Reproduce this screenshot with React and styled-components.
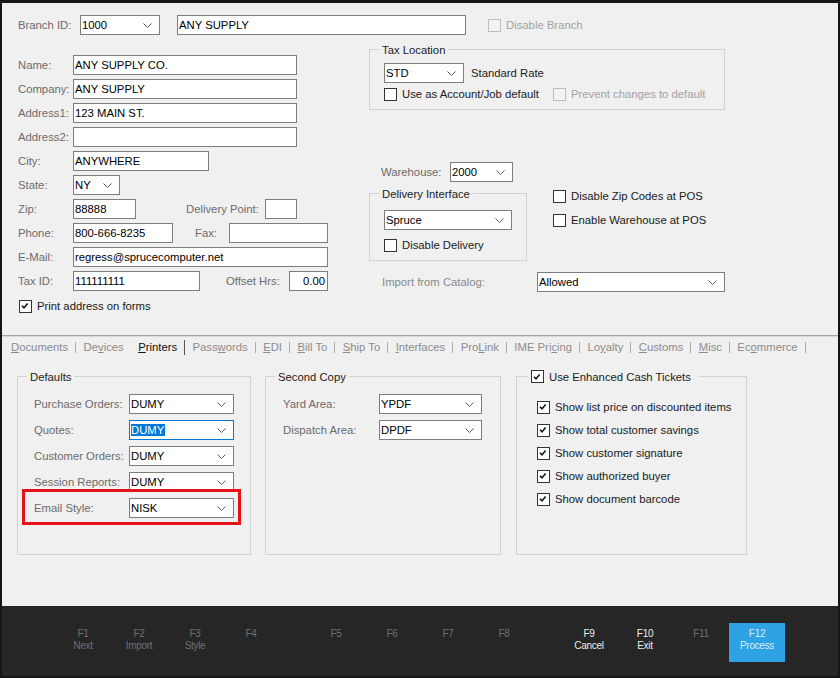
import React from 'react'
import styled, { createGlobalStyle } from 'styled-components'

const GlobalStyle = createGlobalStyle`
  * { box-sizing: border-box; }
  body {
    margin: 0;
    background: #f0f0f0;
    font-family: "Liberation Sans", Arial, sans-serif;
    font-size: 11.3px;
    color: #000;
  }
`

// frame
const Frame = styled.div`
  width: 840px;
  height: 678px;
  border: 2px solid #161616;
  border-top-width: 3px;
  display: flex;
  flex-direction: column;
  background: #f0f0f0;
  overflow: hidden;
`

const Top = styled.div`
  height: 332px;
  padding: 12px 0 0 16px;
  flex-shrink: 0;
`

const Row = styled.div`
  display: flex;
  align-items: center;
  height: 20px;
  margin-top: ${p => p.mt || 0}px;
  flex-shrink: 0;
`

const Label = styled.span`
  width: ${p => p.w}px;
  margin-left: ${p => p.ml || 0}px;
  flex-shrink: 0;
  white-space: nowrap;
  color: ${p => (p.light ? '#8a8a8a' : '#6b6b6b')};
`

const Text = styled.span`
  margin-left: ${p => p.ml || 0}px;
  color: #1c1c1c;
  white-space: nowrap;
`

const Box = styled.div`
  width: ${p => p.w}px;
  height: 20px;
  margin-left: ${p => p.ml || 0}px;
  flex-shrink: 0;
  background: #fff;
  border: 1px solid ${p => (p.focus ? '#0078d7' : '#7d7d7d')};
  padding: 0 2px 0 1px;
  display: flex;
  align-items: center;
  justify-content: ${p => (p.right ? 'flex-end' : 'space-between')};
  white-space: nowrap;
  color: #000;
  line-height: 16px;
`

const Selected = styled.span`
  background: #0078d7;
  color: #fff;
  padding-right: 1px;
`

const Chevron = () => (
  <svg width="9" height="5" viewBox="0 0 9 5" style={{ marginRight: 5, flexShrink: 0 }}>
    <path d="M0.5 0.5 L4.5 4.5 L8.5 0.5" fill="none" stroke="#5a5a5a" strokeWidth="1" />
  </svg>
)

function Select({ w, ml, focus, children }) {
  return (
    <Box w={w} ml={ml} focus={focus}>
      <span>{children}</span>
      <Chevron />
    </Box>
  )
}

// checkbox
const CheckSquare = styled.span`
  width: 13px;
  height: 13px;
  flex-shrink: 0;
  border: 1px solid ${p => (p.disabled ? '#bdbdbd' : '#333')};
  background: ${p => (p.disabled ? '#f3f3f3' : '#fff')};
  display: inline-flex;
  align-items: center;
  justify-content: flex-start;
  padding-left: 1px;
`

const CheckRow = styled.div`
  display: flex;
  align-items: center;
  gap: 5px;
  height: 14px;
  width: ${p => (p.w ? p.w + 'px' : 'auto')};
  margin-left: ${p => p.ml || 0}px;
  margin-top: ${p => p.mt || 0}px;
  flex-shrink: 0;
  white-space: nowrap;
  color: ${p => (p.disabled ? '#a2a2a2' : '#1a1a1a')};
`

function Check({ checked, disabled, children, ...rest }) {
  return (
    <CheckRow disabled={disabled} {...rest}>
      <CheckSquare disabled={disabled}>
        {checked && (
          <svg width="8" height="8" viewBox="0 0 8 8">
            <path d="M1 3.8 L3 5.9 L6.6 1.6" fill="none" stroke="#111" strokeWidth="1.6" />
          </svg>
        )}
      </CheckSquare>
      <span>{children}</span>
    </CheckRow>
  )
}

// group box
const Group = styled.div`
  position: relative;
  width: ${p => p.w}px;
  height: ${p => p.h}px;
  flex-shrink: 0;
  border: 1px solid #d2d2d2;
  padding: ${p => p.pt}px 0 0 ${p => p.pl}px;
  margin-left: ${p => p.ml || 0}px;
`

const Legend = styled.div`
  position: absolute;
  top: -8px;
  left: ${p => p.left || 9}px;
  padding: 0 ${p => p.pr || 3}px 0 3px;
  height: 15px;
  display: flex;
  align-items: center;
  background: #f0f0f0;
  color: #1c1c1c;
  white-space: nowrap;
`

// top layout
const Body = styled.div`
  display: flex;
  margin-top: 14px;
`

const LeftCol = styled.div`
  width: 310px;
  padding-top: 6px;
  display: flex;
  flex-direction: column;
  gap: 4px;
`

const RightCol = styled.div`
  margin-left: 41px;
  display: flex;
  flex-direction: column;
`

const DeliveryLine = styled.div`
  display: flex;
  align-items: flex-start;
  margin-top: 11px;
`

const SideChecks = styled.div`
  display: flex;
  flex-direction: column;
  gap: 10px;
  margin: -4px 0 0 26px;
`

// tabs
const Divider = styled.div`
  height: 2px;
  border-top: 1px solid #a3a3a3;
  border-bottom: 1px solid #d9d9d9;
  flex-shrink: 0;
`

const TabBar = styled.div`
  height: 20px;
  display: flex;
  align-items: center;
  padding-left: 9px;
  flex-shrink: 0;
`

const Tab = styled.span`
  padding: 0 7px 0 ${p => (p.first ? 0 : 7.4)}px;
  color: ${p => (p.active ? '#111' : '#8c8c8c')};
  white-space: nowrap;
`

const TabSep = styled.span`
  width: 1px;
  height: ${p => (p.dark ? 15 : 11)}px;
  background: ${p => (p.dark ? '#555' : '#ababab')};
  flex-shrink: 0;
`

// bottom panels
const Panels = styled.div`
  display: flex;
  margin-top: 19px;
  padding-left: 15px;
`

const Stack = styled.div`
  display: flex;
  flex-direction: column;
  align-items: flex-start;
  gap: ${p => p.gap}px;
`

const Highlight = styled.div`
  border: 3px solid #e3121b;
  margin: -9px 0 0 -12px;
  padding: 6px 4px 4px 9px;
`

// footer
const Footer = styled.div`
  height: 70px;
  margin-top: auto;
  background: #262626;
  display: flex;
  justify-content: center;
  padding-top: 17px;
  flex-shrink: 0;
`

const KeyGroup = styled.div`
  display: flex;
  margin-left: ${p => (p.first ? 0 : 29)}px;
`

const FKey = styled.div`
  width: 56px;
  height: 39px;
  padding-top: 5px;
  text-align: center;
  font-size: 10px;
  line-height: 12px;
  letter-spacing: -0.3px;
  background: ${p => (p.primary ? '#2fa2e3' : 'transparent')};
  color: ${p => (p.primary ? '#d6efff' : p.enabled ? '#ececec' : '#707070')};
`

const tabs = [
  ['D', 'ocuments'],
  ['De', 'v', 'ices'],
  ['', 'P', 'rinters'],
  ['Pass', 'w', 'ords'],
  ['', 'E', 'DI'],
  ['', 'B', 'ill To'],
  ['', 'S', 'hip To'],
  ['', 'I', 'nterfaces'],
  ['Pro', 'L', 'ink'],
  ['IME Pri', 'c', 'ing'],
  ['Lo', 'y', 'alty'],
  ['', 'C', 'ustoms'],
  ['', 'M', 'isc'],
  ['Ec', 'o', 'mmerce'],
]

const keys = [
  [['F1', 'Next'], ['F2', 'Import'], ['F3', 'Style'], ['F4']],
  [['F5'], ['F6'], ['F7'], ['F8']],
  [['F9', 'Cancel', 'on'], ['F10', 'Exit', 'on'], ['F11'], ['F12', 'Process', 'primary']],
]

const cashOptions = [
  'Show list price on discounted items',
  'Show total customer savings',
  'Show customer signature',
  'Show authorized buyer',
  'Show document barcode',
]

export default function App() {
  return (
    <Frame>
      <GlobalStyle />

      <Top>
        <Row>
          <Label w={62}>Branch ID:</Label>
          <Select w={80}>1000</Select>
          <Box w={289} ml={17}>ANY SUPPLY</Box>
          <Check disabled ml={22}>Disable Branch</Check>
        </Row>

        <Body>
          <LeftCol>
            <Row><Label w={55}>Name:</Label><Box w={224}>ANY SUPPLY CO.</Box></Row>
            <Row><Label w={55}>Company:</Label><Box w={224}>ANY SUPPLY</Box></Row>
            <Row><Label w={55}>Address1:</Label><Box w={224}>123 MAIN ST.</Box></Row>
            <Row><Label w={55}>Address2:</Label><Box w={224} /></Row>
            <Row><Label w={55}>City:</Label><Box w={136}>ANYWHERE</Box></Row>
            <Row><Label w={55}>State:</Label><Select w={47}>NY</Select></Row>
            <Row>
              <Label w={55}>Zip:</Label><Box w={63}>88888</Box>
              <Label w={79} ml={50}>Delivery Point:</Label><Box w={32} />
            </Row>
            <Row>
              <Label w={55}>Phone:</Label><Box w={100}>800-666-8235</Box>
              <Label w={34} ml={22}>Fax:</Label><Box w={99} />
            </Row>
            <Row><Label w={55}>E-Mail:</Label><Box w={255}>regress@sprucecomputer.net</Box></Row>
            <Row>
              <Label w={55}>Tax ID:</Label><Box w={127}>111111111</Box>
              <Label w={63} ml={26}>Offset Hrs:</Label><Box w={39} right>0.00</Box>
            </Row>
            <Check checked ml={1} mt={4}>Print address on forms</Check>
          </LeftCol>

          <RightCol>
            <Group w={356} h={61} pt={13} pl={14}>
              <Legend>Tax Location</Legend>
              <Row>
                <Select w={80}>STD</Select>
                <Text ml={7}>Standard Rate</Text>
              </Row>
              <Row mt={1} style={{ height: 20 }}>
                <Check w={169}>Use as Account/Job default</Check>
                <Check disabled>Prevent changes to default</Check>
              </Row>
            </Group>

            <Row mt={52}>
              <Label w={69} ml={12}>Warehouse:</Label>
              <Select w={63}>2000</Select>
            </Row>

            <DeliveryLine>
              <Group w={158} h={68} pt={16} pl={14}>
                <Legend>Delivery Interface</Legend>
                <Select w={128}>Spruce</Select>
                <Check mt={8}>Disable Delivery</Check>
              </Group>
              <SideChecks>
                <Check>Disable Zip Codes at POS</Check>
                <Check>Enable Warehouse at POS</Check>
              </SideChecks>
            </DeliveryLine>

            <Row mt={11}>
              <Label w={155} ml={13} light>Import from Catalog:</Label>
              <Select w={188}>Allowed</Select>
            </Row>
          </RightCol>
        </Body>
      </Top>

      <Divider />

      <TabBar>
        {tabs.map(([pre, key, post = ''], i) => {
          const active = i === 2
          const beforeActive = i === 1
          return (
            <React.Fragment key={i}>
              <Tab first={i === 0} active={active}>
                {i === 0 ? <><u>{pre}</u>{key}</> : <>{pre}<u>{key}</u>{post}</>}
              </Tab>
              {!beforeActive && <TabSep dark={active} />}
            </React.Fragment>
          )
        })}
      </TabBar>

      <Panels>
        <Group w={234} h={179} pt={17} pl={16}>
          <Legend>Defaults</Legend>
          <Stack gap={6}>
            <Row><Label w={95}>Purchase Orders:</Label><Select w={105}>DUMY</Select></Row>
            <Row><Label w={95}>Quotes:</Label><Select w={105} focus><Selected>DUMY</Selected></Select></Row>
            <Row><Label w={95}>Customer Orders:</Label><Select w={105}>DUMY</Select></Row>
            <Row><Label w={95}>Session Reports:</Label><Select w={105}>DUMY</Select></Row>
            <Highlight>
              <Row><Label w={95}>Email Style:</Label><Select w={105}>NISK</Select></Row>
            </Highlight>
          </Stack>
        </Group>

        <Group w={236} h={179} pt={17} pl={17} ml={14}>
          <Legend>Second Copy</Legend>
          <Stack gap={6}>
            <Row><Label w={96}>Yard Area:</Label><Select w={103}>YPDF</Select></Row>
            <Row><Label w={96}>Dispatch Area:</Label><Select w={103}>DPDF</Select></Row>
          </Stack>
        </Group>

        <Group w={231} h={179} pt={23} pl={20} ml={15}>
          <Legend left={11} pr={8}>
            <Check checked>Use Enhanced Cash Tickets</Check>
          </Legend>
          <Stack gap={9}>
            {cashOptions.map(o => (
              <Check key={o} checked>{o}</Check>
            ))}
          </Stack>
        </Group>
      </Panels>

      <Footer>
        {keys.map((group, g) => (
          <KeyGroup key={g} first={g === 0}>
            {group.map(([k, name, state]) => (
              <FKey key={k} enabled={state === 'on'} primary={state === 'primary'}>
                <div>{k}</div>
                {name && <div>{name}</div>}
              </FKey>
            ))}
          </KeyGroup>
        ))}
      </Footer>
    </Frame>
  )
}
